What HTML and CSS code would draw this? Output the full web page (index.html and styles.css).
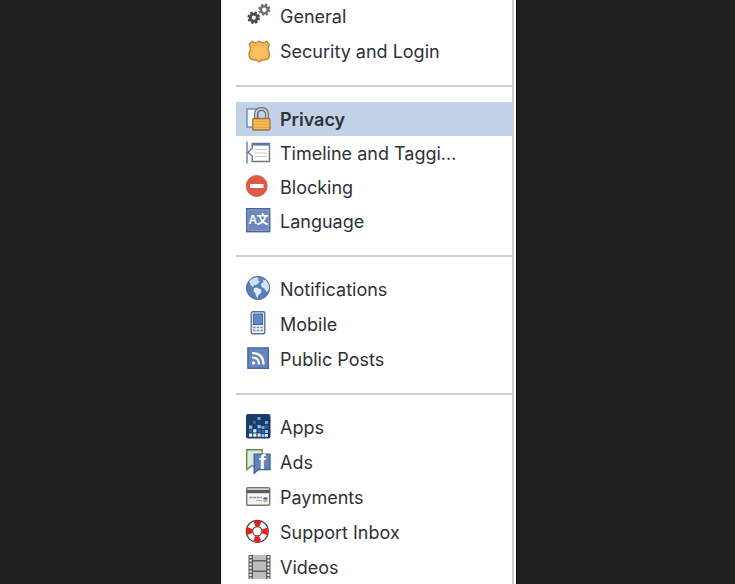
FILE: index.html
```html
<!DOCTYPE html>
<html lang="en">
<head>
    <meta charset="UTF-8">
    <meta name="viewport" content="width=device-width, initial-scale=1.0">
    <title>Settings</title>
    <link rel="stylesheet" href="styles.css">
</head>
<body>
    <div class="panel">
        <nav class="menu">
            <!-- Account -->
            <ul class="menu-group">
                <li><a href="#general" class="menu-item">
                    <svg class="icon" viewBox="0 0 26 26" fill="none">
                        <circle cx="8.7" cy="14.7" r="3.5" stroke="#4a4a4a" stroke-width="2.8"/>
                        <circle cx="8.7" cy="14.7" r="5.2" stroke="#4a4a4a" stroke-width="2.2" stroke-dasharray="2.4 1.684"/>
                        <circle cx="19.3" cy="6.7" r="3.5" stroke="#757373" stroke-width="2.6"/>
                        <circle cx="19.3" cy="6.7" r="5.1" stroke="#757373" stroke-width="2.1" stroke-dasharray="2.3 1.706"/>
                    </svg>
                    General</a></li>
                <li><a href="#security" class="menu-item">
                    <svg class="icon" viewBox="0 0 26 26">
                        <path d="M7 3.2Q9.5 5.6 12 4.4L14.2 3.2L16.4 4.4Q19 5.6 21.5 3.2L24.4 6.2Q22.5 9.5 23.5 12.5Q26 18.5 22.5 21Q20.5 22 17.5 22L14.2 24L11 22Q8 22 6 21Q2.5 18.5 5 12.5Q6 9.5 4.2 6.2Z" fill="#f9b84d" stroke="#c08a4c" stroke-width="1.4" stroke-linejoin="round"/>
                        <path d="M7.6 8Q14 10 14 6Q14.4 10 20.8 8Q20 14 21.5 18Q18 21 14.2 21Q10 21 7 18Q8.5 14 7.6 8Z" fill="#fdc063"/>
                    </svg>
                    Security and Login</a></li>
            </ul>

            <!-- Privacy -->
            <ul class="menu-group compact">
                <li><a href="#privacy" class="menu-item active" aria-current="page">
                    <svg class="icon" viewBox="0 0 26 26">
                        <rect x="2" y="3" width="11" height="18" fill="#f4f7fc" stroke="#6382b8" stroke-width="1.3"/>
                        <path d="M11 13V8.5Q11 3 16.5 3T22 8.5V13" fill="none" stroke="#6b6b6b" stroke-width="4"/>
                        <path d="M11 13V8.5Q11 3 16.5 3T22 8.5V13" fill="none" stroke="#d5d5d5" stroke-width="1.6"/>
                        <rect x="7.7" y="12.5" width="17.3" height="11.5" rx="1" fill="#f8b752" stroke="#9a7440" stroke-width="1.3"/>
                        <path d="M9 15.5H24M9 18.5H24M9 21.5H24" stroke="#e3a548" stroke-width=".8"/>
                    </svg>
                    Privacy</a></li>
                <li><a href="#timeline" class="menu-item">
                    <svg class="icon" viewBox="0 0 26 26">
                        <path d="M2 1.5V23.5" stroke="#6787bb" stroke-width="1.5"/>
                        <path d="M7.2 3.5H24.5V21.5H7.2V16L2.8 12.2L7.2 8.5Z" fill="#fff" stroke="#747474" stroke-width="1.4"/>
                        <path d="M7 4.3H25" stroke="#5878ad" stroke-width="2.6"/>
                        <path d="M9.5 9.5H22M9.5 13H22M9.5 16.5H22" stroke="#ccc" stroke-width="1.2"/>
                    </svg>
                    Timeline and Taggi...</a></li>
                <li><a href="#blocking" class="menu-item">
                    <svg class="icon" viewBox="0 0 26 26">
                        <circle cx="11.7" cy="12" r="10.5" fill="#dd5948" stroke="#cb6657" stroke-width="1"/>
                        <rect x="5" y="10" width="13.5" height="4" rx=".5" fill="#fff"/>
                    </svg>
                    Blocking</a></li>
                <li><a href="#language" class="menu-item">
                    <svg class="icon" viewBox="0 0 26 26">
                        <rect x="1.7" y=".7" width="23" height="23" fill="#6d87b9" stroke="#47669f" stroke-width="1.4"/>
                        <rect x="3" y="2" width="20.4" height="20.4" fill="none" stroke="#879fcb" stroke-width="1"/>
                        <text class="glyph glyph-latin" x="3.5" y="16">A</text>
                        <text class="glyph glyph-han" x="11.5" y="16">文</text>
                    </svg>
                    Language</a></li>
            </ul>

            <!-- Updates -->
            <ul class="menu-group">
                <li><a href="#notifications" class="menu-item">
                    <svg class="icon" viewBox="0 0 26 26">
                        <circle cx="13" cy="12" r="11.6" fill="#5c7fb7" stroke="#466ba5" stroke-width="1"/>
                        <path d="M4 5.5Q7 1.8 12 1.2L14 2.5L12.5 4L15 5.5L12 8.5L9.5 9L8 11L6 9.5Z" fill="#d0e1f2"/>
                        <path d="M9 12L12 11.5L16.5 14L16 17L13.5 19L12.5 22.5Q10.5 20 10.5 17.5L8.5 15Z" fill="#dce9f6"/>
                        <path d="M17.5 3.5L21 4.5Q24.5 8.5 24 13.5L21.5 16L19.5 12.5L16.5 11L16 8L18.5 6Z" fill="#d4e3f3"/>
                    </svg>
                    Notifications</a></li>
                <li><a href="#mobile" class="menu-item">
                    <svg class="icon" viewBox="0 0 26 26">
                        <rect x="6.2" y=".7" width="13.6" height="22" rx="1.5" fill="#edf1f7" stroke="#5f7295" stroke-width="1.4"/>
                        <rect x="8.4" y="3" width="9.2" height="10.5" fill="#5f88c5" stroke="#42699f" stroke-width="1"/>
                        <path d="M8 16.5H18M8 19.5H18" stroke="#7d90b3" stroke-width="1.6" stroke-dasharray="2.5 1.2"/>
                    </svg>
                    Mobile</a></li>
                <li><a href="#posts" class="menu-item">
                    <svg class="icon" viewBox="0 0 26 26" fill="none">
                        <rect x="2.9" y="1.9" width="20.4" height="20.4" fill="#6785bd" stroke="#47669f" stroke-width="1.4"/>
                        <circle cx="8.5" cy="17" r="1.7" fill="#fff"/>
                        <path d="M7 11.5Q14 11.5 14 18.5M7 7Q18.5 7 18.5 18.5" stroke="#fff" stroke-width="2.2"/>
                    </svg>
                    Public Posts</a></li>
            </ul>

            <!-- Apps and support -->
            <ul class="menu-group">
                <li><a href="#apps" class="menu-item">
                    <svg class="icon" viewBox="0 0 26 26">
                        <rect x="1" y="0" width="24.5" height="24.5" rx="2" fill="#1d3b69"/>
                        <path d="M12.5 3h3v3H12.5zM20 7h3v3H20zM16.500 12h3v3H16.500z" fill="#67a9dd"/>
                        <path d="M4 11.500h3.200v3.200H4zM12.500 11h3.200v3.200H12.500zM20 16h3v3H20zM16.500 20h3v3H16.500z" fill="#8ac6ee"/>
                        <path d="M4 19.500h3.200v3.200H4zM8.200 19.500h3.200v3.200H8.200zM8.200 15.300h3.200v3.200H8.200zM12.500 19.500h3.200v3.200H12.500zM20 20h3v3H20z" fill="#d8effb"/>
                        <path d="M4 15.500h3.200v3H4zM16.500 16h3v3H16.500zM12.500 15.300h3.200v3.200H12.500zM8 7h3v3H8zM20 11.500h3v3H20z" fill="#3a689e"/>
                    </svg>
                    Apps</a></li>
                <li><a href="#ads" class="menu-item">
                    <svg class="icon" viewBox="0 0 26 26">
                        <path d="M1.7 .8H17.2V17H6.5L1.7 20.8Z" fill="#dfe9da" stroke="#5e9150" stroke-width="1.4"/>
                        <path d="M9.2 5.2H25V20.5H13.5L9.2 24.3Z" fill="#6280b9" stroke="#425f9b" stroke-width="1.3"/>
                        <text class="glyph glyph-f" x="14" y="20">f</text>
                    </svg>
                    Ads</a></li>
                <li><a href="#payments" class="menu-item">
                    <svg class="icon" viewBox="0 0 26 26">
                        <rect x="1.7" y="3.7" width="23" height="17.6" rx="1" fill="#f4f4f4" stroke="#777" stroke-width="1.4"/>
                        <path d="M1.5 7.5H25" stroke="#605b58" stroke-width="3.4"/>
                        <path d="M4.5 13.5H17" stroke="#8f8f8f" stroke-width="1.6" stroke-dasharray="3 .6"/>
                        <path d="M11 16.5H17" stroke="#aaa" stroke-width="1"/>
                        <path d="M18.5 14.5H22.5" stroke="#4a70b2" stroke-width="2.4"/>
                        <path d="M18.5 17.2H22.5" stroke="#e6b143" stroke-width="2"/>
                    </svg>
                    Payments</a></li>
                <li><a href="#support" class="menu-item">
                    <svg class="icon" viewBox="0 0 26 26" fill="none">
                        <circle cx="12.3" cy="12.3" r="7.8" stroke="#4c4c4c" stroke-width="7.6"/>
                        <circle cx="12.3" cy="12.3" r="7.8" stroke="#fff" stroke-width="5.2"/>
                        <circle cx="12.3" cy="12.3" r="7.8" stroke="#ee1c1c" stroke-width="5.6" stroke-dasharray="6 6.252" stroke-dashoffset="3"/>
                    </svg>
                    Support Inbox</a></li>
                <li><a href="#videos" class="menu-item">
                    <svg class="icon" viewBox="0 0 26 26">
                        <rect x="3.5" y="1" width="22" height="24" fill="#5f5f5f"/>
                        <path d="M8 1H21V6H8zM8 7.500H21V16.500H8zM8 18H21V25H8z" fill="#bcbcb9"/>
                        <path d="M5.6 2V25M23.4 2V25" stroke="#f0f0f0" stroke-width="2" stroke-dasharray="2 1.6"/>
                    </svg>
                    Videos</a></li>
            </ul>
        </nav>
    </div>
</body>
</html>
```
FILE: styles.css
```css
body {
    margin: 0;
    padding-left: 2px;
    background-color: #212121;
    color: #2f3138;
    font-family: Inter, "Liberation Sans", sans-serif;
    font-size: 18px;
    line-height: 24px;
    overflow: hidden;
}

/* White column in the middle of the page */
.panel {
    box-sizing: border-box;
    max-width: 297px;
    min-height: 100vh;
    margin: 0 auto;
    padding: 0 2px 0 15px;
    background-color: #fff;
    border: solid #0c0c0c;
    border-width: 0 1px;
    display: flex;
}

.menu {
    flex: 1;
    border-right: 2px solid #ccc;
    margin-top: -1px;
}

/* Menu Groups */
.menu-group {
    list-style: none;
    margin: 0;
    padding: 0 0 17px;
    display: flex;
    flex-direction: column;
    gap: 1px;
}

.menu-group.compact {
    gap: 0;
}

.menu-group + .menu-group {
    border-top: 2px solid #d0d1d1;
    padding-top: 15px;
}

.menu-group:last-child {
    padding-bottom: 0;
}

/* Menu Items */
.menu-item {
    box-sizing: border-box;
    display: flex;
    align-items: center;
    gap: 9px;
    height: 34px;
    padding: 2px 0 0 9px;
    color: inherit;
    text-decoration: none;
    white-space: nowrap;
}

.menu-item:hover {
    background-color: #eef2f8;
}

.menu-item.active {
    background-color: #c3d1e7;
    font-weight: 600;
}

/* Icons */
.icon {
    width: 26px;
    height: 26px;
    flex: none;
    margin-bottom: 2px;
}

.glyph {
    fill: #fff;
    font-weight: bold;
}

.glyph-latin {
    font-family: "Liberation Sans", sans-serif;
    font-size: 12px;
}

.glyph-han {
    font-family: "Noto Sans CJK SC", sans-serif;
    font-size: 12px;
}

.glyph-f {
    font-family: "Liberation Sans", sans-serif;
    font-size: 20px;
}
```
